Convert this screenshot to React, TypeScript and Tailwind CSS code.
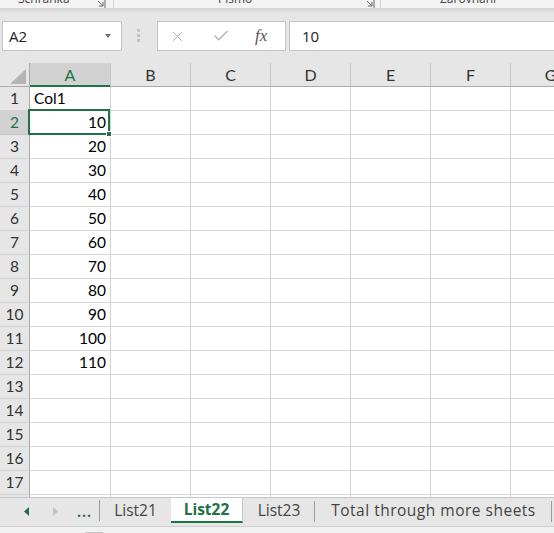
import React from "react";
import { X, Check } from "lucide-react";

const COLUMNS = ["A", "B", "C", "D", "E", "F", "G"];
const ROW_COUNT = 18;

const DATA: Record<number, string> = {
  1: "Col1",
  2: "10",
  3: "20",
  4: "30",
  5: "40",
  6: "50",
  7: "60",
  8: "70",
  9: "80",
  10: "90",
  11: "100",
  12: "110",
};

const SHEETS = [
  { name: "List21", width: "w-[71px]" },
  { name: "List22", width: "w-[72px]", active: true },
  { name: "List23", width: "w-[72px]" },
  { name: "Total through more sheets", width: "w-[237px] tracking-[0.5px]" },
];

function Launcher() {
  return (
    <svg width="12" height="12" viewBox="0 0 12 12" className="text-[#666]">
      <path d="M1 1h10v10" fill="none" stroke="currentColor" />
      <path d="M4 4l5 5M9 5v4H5" fill="none" stroke="currentColor" />
    </svg>
  );
}

function RibbonLabels() {
  return (
    <div className="flex h-[8px] overflow-hidden bg-[#f3f3f3] font-['Open_Sans',sans-serif] text-[12px] leading-[16px] text-[#444]">
      <div className="flex w-[114px] shrink-0 border-r border-[#d4d4d4] -mt-[9px]">
        <span className="ml-[18px]">Schránka</span>
        <span className="ml-[24px] mt-[6px]">
          <Launcher />
        </span>
      </div>
      <div className="flex w-[267px] shrink-0 border-r border-[#d4d4d4] -mt-[9px]">
        <span className="ml-[104px]">Písmo</span>
        <span className="ml-[111px] mt-[6px]">
          <Launcher />
        </span>
      </div>
      <div className="flex -mt-[9px]">
        <span className="ml-[59px]">Zarovnání</span>
      </div>
    </div>
  );
}

function FormulaBar() {
  return (
    <div className="flex h-[55px] items-start bg-[linear-gradient(to_bottom,#d2d2d2,#e6e6e6_5px)] pl-[2px] pt-[13px] font-['Open_Sans',sans-serif]">
      <div className="flex h-[30px] w-[120px] shrink-0 items-center justify-between border border-[#c6c6c6] bg-white pl-[6px] pr-[10px] text-[15px] text-[#222]">
        <span>A2</span>
        <svg width="6" height="4" viewBox="0 0 6 4">
          <path d="M0 0h6L3 4z" fill="#707070" />
        </svg>
      </div>
      <div className="ml-[15px] mt-[8px] flex w-[4px] shrink-0 flex-col gap-[2px]">
        <span className="h-[3px] w-[3px] bg-[#c3c3c3]" />
        <span className="h-[3px] w-[3px] bg-[#c3c3c3]" />
        <span className="h-[3px] w-[3px] bg-[#c3c3c3]" />
      </div>
      <div className="ml-[16px] flex h-[30px] w-[129px] shrink-0 items-center border border-[#c6c6c6] bg-white">
        <X size={17} strokeWidth={1.4} className="ml-[11px] text-[#b4b4b4]" />
        <Check size={18} strokeWidth={2} className="ml-[26px] text-[#b4b4b4]" />
        <span className="ml-[25px] font-['Liberation_Serif',serif] text-[17px] italic text-[#555]">
          fx
        </span>
      </div>
      <div className="ml-[3px] flex h-[30px] flex-1 items-center border border-r-0 border-[#c6c6c6] bg-white pl-[12px] text-[15px] text-[#222]">
        10
      </div>
    </div>
  );
}

function SheetGrid() {
  return (
    <div className="h-[434px] overflow-hidden bg-white font-['Lato',sans-serif] text-[15.5px]">
      {/* column headers */}
      <div className="flex h-[24px] border-b border-[#ababab] bg-[#e6e6e6]">
        <div className="flex w-[30px] shrink-0 items-end justify-end border-r border-[#ababab] pb-[2px] pr-[3px]">
          <svg width="16" height="15" viewBox="0 0 16 15">
            <path d="M16 0v15H0z" fill="#b5b5b5" />
          </svg>
        </div>
        {COLUMNS.map((col, i) => (
          <div
            key={col}
            className={
              i === 0
                ? "relative flex w-[81px] shrink-0 items-center justify-center border-r border-[#c6c6c6] bg-[#d2d2d2] text-[16px] text-[#217346]"
                : "flex w-[80px] shrink-0 items-center justify-center border-r border-[#c6c6c6] text-[16px] text-[#333]"
            }
          >
            {col}
            {i === 0 && (
              <span className="absolute -bottom-[1px] left-0 right-0 h-[2px] bg-[#217346]" />
            )}
          </div>
        ))}
      </div>

      {/* rows */}
      {Array.from({ length: ROW_COUNT }, (_, r) => {
        const row = r + 1;
        const value = DATA[row];
        const selected = row === 2;
        return (
          <div key={row} className="flex h-[24px]">
            <div
              className={
                selected
                  ? "flex w-[30px] shrink-0 items-center justify-center border-b border-r border-b-[#c6c6c6] border-r-[#ababab] bg-[#d2d2d2] text-[#217346]"
                  : "flex w-[30px] shrink-0 items-center justify-center border-b border-r border-b-[#d4d4d4] border-r-[#ababab] bg-[#e6e6e6] text-[#333]"
              }
            >
              {row}
            </div>
            {COLUMNS.map((col, i) => (
              <div
                key={col}
                className={
                  i === 0
                    ? "relative flex w-[81px] shrink-0 items-center border-b border-r border-[#d4d4d4] px-[4px] text-black"
                    : "w-[80px] shrink-0 border-b border-r border-[#d4d4d4]"
                }
              >
                {i === 0 && value && (
                  <span className={row === 1 ? "" : "ml-auto"}>{value}</span>
                )}
                {i === 0 && selected && (
                  <div className="absolute -left-[2px] -top-[2px] z-10 h-[26px] w-[82px] border-2 border-[#217346]">
                    <span className="absolute -bottom-[4px] -right-[4px] h-[6px] w-[6px] border border-white bg-[#217346]" />
                  </div>
                )}
              </div>
            ))}
          </div>
        );
      })}
    </div>
  );
}

function SheetTabs() {
  return (
    <div className="flex h-[29px] items-start border-t border-[#c6c6c6] bg-[#e6e6e6] font-['Open_Sans',sans-serif] text-[15.5px] text-[#444]">
      <div className="flex h-[25px] w-[100px] shrink-0 items-center">
        <svg width="5" height="9" viewBox="0 0 5 9" className="ml-[24px] mt-[2px]">
          <path d="M5 0v9L0 4.5z" fill="#217346" />
        </svg>
        <svg width="5" height="9" viewBox="0 0 5 9" className="ml-[24px] mt-[2px]">
          <path d="M0 0v9l5-4.5z" fill="#c2c2c2" />
        </svg>
        <span className="ml-[19px] mt-[2px] text-[14px] font-bold tracking-[1px] text-[#217346]">
          ...
        </span>
        <span className="ml-auto h-[21px] w-px bg-[#9a9a9a]" />
      </div>
      {SHEETS.map((sheet) =>
        sheet.active ? (
          <div
            key={sheet.name}
            className={`${sheet.width} flex h-[25px] shrink-0 items-center justify-center border-b-2 border-r border-[#c6c6c6] border-b-[#217346] bg-white font-bold text-[#217346]`}
          >
            {sheet.name}
          </div>
        ) : (
          <div
            key={sheet.name}
            className={`${sheet.width} relative flex h-[25px] shrink-0 items-center justify-center`}
          >
            {sheet.name}
            {sheet.name !== "List21" && (
              <span className="absolute right-0 top-[3px] h-[21px] w-px bg-[#9a9a9a]" />
            )}
          </div>
        )
      )}
    </div>
  );
}

export default function App() {
  return (
    <div className="h-[533px] w-[554px] overflow-hidden bg-[#e6e6e6]">
      <RibbonLabels />
      <FormulaBar />
      <SheetGrid />
      <SheetTabs />
      {/* status strip with the scroll thumb edge */}
      <div className="flex h-[7px] border-t border-[#d0d0d0] bg-[#f1f1f1]">
        <span className="ml-[85px] mt-[5px] h-[2px] w-[18px] bg-[#c6c6c6]" />
      </div>
    </div>
  );
}
